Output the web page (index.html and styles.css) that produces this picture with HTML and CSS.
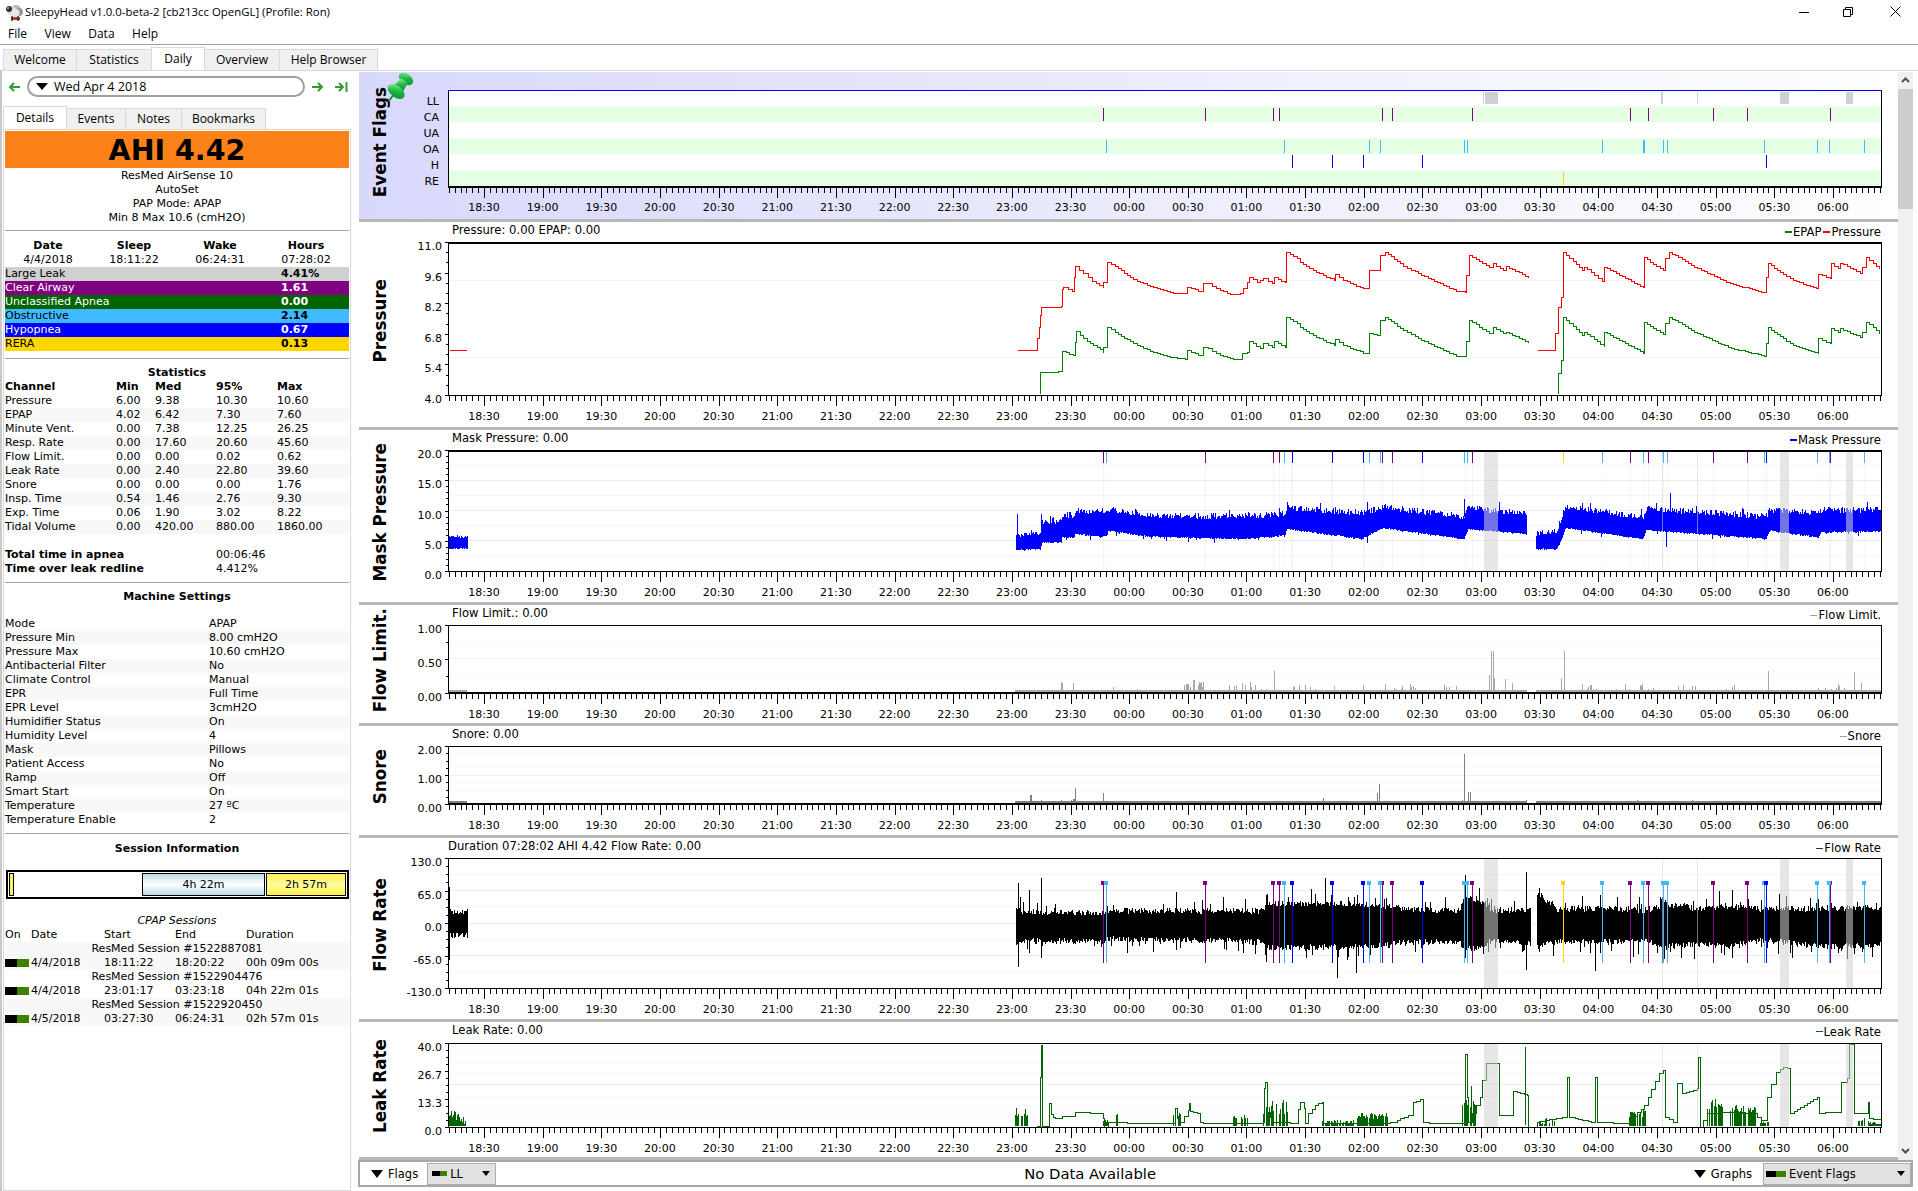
FILE: index.html
```html
<!DOCTYPE html>
<html lang="en">
<head>
<meta charset="utf-8">
<title>SleepyHead</title>
<link rel="stylesheet" href="styles.css">
</head>
<body>
<div class="window">
  <header class="titlebar">
    <svg class="app-icon" viewBox="0 0 20 18" width="20" height="18">
      <circle cx="12" cy="7" r="5" fill="#b8b8b8"/><circle cx="8" cy="8" r="4.5" fill="#d8d8d8"/><circle cx="15" cy="9" r="4" fill="#9a9a9a"/><circle cx="11" cy="10" r="4.5" fill="#e8e8e8"/>
      <circle cx="5" cy="6" r="3" fill="#3a3030"/><circle cx="4" cy="5" r=".8" fill="#fff"/>
      <path d="M7 14h9v3H7z" fill="#b04030"/><path d="M8 13v5M14 13v5" stroke="#303030" stroke-width="1.4"/>
    </svg>
    <span class="app-title">SleepyHead v1.0.0-beta-2 [cb213cc OpenGL] (Profile: Ron)</span>
    <div class="winctl">
      <svg width="10" height="10" viewBox="0 0 10 10"><path d="M0 5.5h10" stroke="#000"/></svg>
      <svg width="10" height="10" viewBox="0 0 10 10"><path d="M.5 2.5h7v7h-7zM2.5 2.5v-2h7v7h-2" fill="none" stroke="#000"/></svg>
      <svg width="11" height="11" viewBox="0 0 11 11"><path d="M.5.5l10 10M10.5.5l-10 10" stroke="#000"/></svg>
    </div>
  </header>
  <nav class="menubar">
    <span class="menu-item">File</span><span class="menu-item">View</span><span class="menu-item">Data</span><span class="menu-item">Help</span>
  </nav>
  <div class="tabs main-tabs">
    <span class="tab t-welcome">Welcome</span>
    <span class="tab t-stats">Statistics</span>
    <span class="tab t-daily active">Daily</span>
    <span class="tab t-over">Overview</span>
    <span class="tab t-help">Help Browser</span>
  </div>
  <main class="main">
    <aside class="sidebar">
      <div class="datenav">
        <svg class="nav-arrow" width="13" height="10" viewBox="0 0 13 10"><path d="M12 5H3M6 1L2 5l4 4" fill="none" stroke="#2f9e2f" stroke-width="2"/></svg>
        <div class="datebox"><span class="tri"></span><span class="date-text">Wed Apr 4 2018</span></div>
        <svg class="nav-arrow" width="13" height="10" viewBox="0 0 13 10"><path d="M1 5h9M7 1l4 4-4 4" fill="none" stroke="#2f9e2f" stroke-width="2"/></svg>
        <svg class="nav-arrow end" width="14" height="10" viewBox="0 0 14 10"><path d="M1 5h7M5 1l4 4-4 4M12.5 0v10" fill="none" stroke="#2f9e2f" stroke-width="2"/></svg>
      </div>
      <div class="tabs sub-tabs">
        <span class="tab s-details active">Details</span>
        <span class="tab s-events">Events</span>
        <span class="tab s-notes">Notes</span>
        <span class="tab s-book">Bookmarks</span>
      </div>
      <div class="pane">
        <div class="ahi">AHI 4.42</div>
        <div class="center">ResMed AirSense 10</div>
        <div class="center">AutoSet</div>
        <div class="center">PAP Mode: APAP</div>
        <div class="center">Min 8 Max 10.6 (cmH2O)</div>
        <div class="rule rule-first"></div>
        <div class="r-times bold center-cells"><span>Date</span><span>Sleep</span><span>Wake</span><span>Hours</span></div>
        <div class="r-times center-cells"><span>4/4/2018</span><span>18:11:22</span><span>06:24:31</span><span>07:28:02</span></div>
        <div class="r-event e-ll"><span>Large Leak</span><b>4.41%</b></div>
        <div class="r-event e-ca"><span>Clear Airway</span><b>1.61</b></div>
        <div class="r-event e-ua"><span>Unclassified Apnea</span><b>0.00</b></div>
        <div class="r-event e-oa"><span>Obstructive</span><b>2.14</b></div>
        <div class="r-event e-h"><span>Hypopnea</span><b>0.67</b></div>
        <div class="r-event e-re"><span>RERA</span><b>0.13</b></div>
        <div class="rule rule-wide"></div>
        <div class="center bold">Statistics</div>
        <div class="r-stat bold"><span>Channel</span><span>Min</span><span>Med</span><span>95%</span><span>Max</span></div>
        <div class="zebra">
          <div class="r-stat"><span>Pressure</span><span>6.00</span><span>9.38</span><span>10.30</span><span>10.60</span></div>
          <div class="r-stat"><span>EPAP</span><span>4.02</span><span>6.42</span><span>7.30</span><span>7.60</span></div>
          <div class="r-stat"><span>Minute Vent.</span><span>0.00</span><span>7.38</span><span>12.25</span><span>26.25</span></div>
          <div class="r-stat"><span>Resp. Rate</span><span>0.00</span><span>17.60</span><span>20.60</span><span>45.60</span></div>
          <div class="r-stat"><span>Flow Limit.</span><span>0.00</span><span>0.00</span><span>0.02</span><span>0.62</span></div>
          <div class="r-stat"><span>Leak Rate</span><span>0.00</span><span>2.40</span><span>22.80</span><span>39.60</span></div>
          <div class="r-stat"><span>Snore</span><span>0.00</span><span>0.00</span><span>0.00</span><span>1.76</span></div>
          <div class="r-stat"><span>Insp. Time</span><span>0.54</span><span>1.46</span><span>2.76</span><span>9.30</span></div>
          <div class="r-stat"><span>Exp. Time</span><span>0.06</span><span>1.90</span><span>3.02</span><span>8.22</span></div>
          <div class="r-stat"><span>Tidal Volume</span><span>0.00</span><span>420.00</span><span>880.00</span><span>1860.00</span></div>
        </div>
        <div class="totals">
          <div class="r-total"><b>Total time in apnea</b><span>00:06:46</span></div>
          <div class="r-total"><b>Time over leak redline</b><span>4.412%</span></div>
        </div>
        <div class="rule rule-tight"></div>
        <div class="center bold heading-gap">Machine Settings</div>
        <div class="zebra">
          <div class="r-set"><span>Mode</span><span>APAP</span></div>
          <div class="r-set"><span>Pressure Min</span><span>8.00 cmH2O</span></div>
          <div class="r-set"><span>Pressure Max</span><span>10.60 cmH2O</span></div>
          <div class="r-set"><span>Antibacterial Filter</span><span>No</span></div>
          <div class="r-set"><span>Climate Control</span><span>Manual</span></div>
          <div class="r-set"><span>EPR</span><span>Full Time</span></div>
          <div class="r-set"><span>EPR Level</span><span>3cmH2O</span></div>
          <div class="r-set"><span>Humidifier Status</span><span>On</span></div>
          <div class="r-set"><span>Humidity Level</span><span>4</span></div>
          <div class="r-set"><span>Mask</span><span>Pillows</span></div>
          <div class="r-set"><span>Patient Access</span><span>No</span></div>
          <div class="r-set"><span>Ramp</span><span>Off</span></div>
          <div class="r-set"><span>Smart Start</span><span>On</span></div>
          <div class="r-set"><span>Temperature</span><span>27 ºC</span></div>
          <div class="r-set"><span>Temperature Enable</span><span>2</span></div>
        </div>
        <div class="rule"></div>
        <div class="center bold">Session Information</div>
        <div class="sessbar">
          <div class="sb-tiny"></div>
          <div class="sb-gap"></div>
          <div class="sb-blue">4h 22m</div>
          <div class="sb-yellow">2h 57m</div>
        </div>
        <div class="center italic cpap">CPAP Sessions</div>
        <div class="r-sess"><span>On</span><span>Date</span><span>Start</span><span>End</span><span>Duration</span></div>
        <div class="zebra-pairs">
          <div class="center">ResMed Session #1522887081</div>
          <div class="r-sess"><span class="chip"></span><span>4/4/2018</span><span>18:11:22</span><span>18:20:22</span><span>00h 09m 00s</span></div>
          <div class="center">ResMed Session #1522904476</div>
          <div class="r-sess"><span class="chip"></span><span>4/4/2018</span><span>23:01:17</span><span>03:23:18</span><span>04h 22m 01s</span></div>
          <div class="center">ResMed Session #1522920450</div>
          <div class="r-sess"><span class="chip"></span><span>4/5/2018</span><span>03:27:30</span><span>06:24:31</span><span>02h 57m 01s</span></div>
        </div>
      </div>
    </aside>
    <div class="content">
      <div class="view">
        <div class="graphs">
          <section class="graph g-flags">
            <div class="gtitle"><span>Event Flags</span></div>
            <div class="gbody"><div class="ghead"></div><svg id="flags" class="plot"></svg></div>
            <svg class="pin" width="29" height="31" viewBox="4 2 23 27">
              <defs><linearGradient id="pinfill" x1="0" y1="0" x2="1" y2="1"><stop offset="0" stop-color="#a4f4b0"/><stop offset=".5" stop-color="#17b63f"/><stop offset="1" stop-color="#0a8a2c"/></linearGradient></defs>
              <g transform="rotate(38 15 15)">
                <ellipse cx="15" cy="5" rx="7" ry="4.500" fill="url(#pinfill)"/>
                <path d="M11.500 7h7l1.500 10H10z" fill="url(#pinfill)"/>
                <ellipse cx="15" cy="19" rx="8.500" ry="5" fill="url(#pinfill)"/>
                <path d="M15 23v7" stroke="#0a8a2c" stroke-width="1.500"/>
              </g>
            </svg>
          </section>
          <section class="graph g-pressure">
            <div class="gtitle"><span>Pressure</span></div>
            <div class="gbody">
              <div class="ghead"><span>Pressure: 0.00 EPAP: 0.00</span><span class="legend"><i class="sw green"></i>EPAP<i class="sw red"></i>Pressure</span></div>
              <svg id="pressure" class="plot"></svg>
            </div>
          </section>
          <section class="graph g-mask">
            <div class="gtitle"><span>Mask Pressure</span></div>
            <div class="gbody">
              <div class="ghead"><span>Mask Pressure: 0.00</span><span class="legend"><i class="sw blue"></i>Mask Pressure</span></div>
              <svg id="mask" class="plot"></svg>
            </div>
          </section>
          <section class="graph g-limit">
            <div class="gtitle"><span>Flow Limit.</span></div>
            <div class="gbody">
              <div class="ghead"><span>Flow Limit.: 0.00</span><span class="legend"><i class="sw grey"></i>Flow Limit.</span></div>
              <svg id="limit" class="plot"></svg>
            </div>
          </section>
          <section class="graph g-snore">
            <div class="gtitle"><span>Snore</span></div>
            <div class="gbody">
              <div class="ghead"><span>Snore: 0.00</span><span class="legend"><i class="sw grey"></i>Snore</span></div>
              <svg id="snore" class="plot"></svg>
            </div>
          </section>
          <section class="graph g-flow">
            <div class="gtitle"><span>Flow Rate</span></div>
            <div class="gbody">
              <div class="ghead flush"><span>Duration 07:28:02 AHI 4.42 Flow Rate: 0.00</span><span class="legend"><i class="sw black"></i>Flow Rate</span></div>
              <svg id="flow" class="plot"></svg>
            </div>
          </section>
          <section class="graph g-leak">
            <div class="gtitle"><span>Leak Rate</span></div>
            <div class="gbody">
              <div class="ghead"><span>Leak Rate: 0.00</span><span class="legend"><i class="sw dkgreen"></i>Leak Rate</span></div>
              <svg id="leak" class="plot"></svg>
            </div>
          </section>
        </div>
        <div class="scrollbar">
          <svg class="sb-arrow" width="9" height="6" viewBox="0 0 9 6"><path d="M1 5l3.500-3.500L8 5" fill="none" stroke="#505050" stroke-width="2"/></svg>
          <div class="sb-thumb"></div>
          <div class="sb-track"></div>
          <svg class="sb-arrow" width="9" height="6" viewBox="0 0 9 6"><path d="M1 1l3.500 3.500L8 1" fill="none" stroke="#505050" stroke-width="2"/></svg>
        </div>
      </div>
      <footer class="bottombar">
        <span class="tri tri-lg"></span><span class="bb-label">Flags</span>
        <div class="combo c-flags"><span class="chip small"></span><span class="combo-text">LL</span><span class="tri tri-sm"></span></div>
        <div class="nodata">No Data Available</div>
        <span class="tri tri-lg"></span><span class="bb-label">Graphs</span>
        <div class="combo c-graphs"><span class="chip small2"></span><span class="combo-text">Event Flags</span><span class="tri tri-sm"></span></div>
      </footer>
    </div>
  </main>
</div>
<script src="charts.js"></script>
</body>
</html>
```
FILE: styles.css
```css
* { box-sizing: border-box; }
html, body { margin: 0; padding: 0; }
body {
  width: 1918px; height: 1191px; overflow: hidden;
  font-family: "DejaVu Sans", sans-serif; font-size: 11px; line-height: 14px;
  color: #000; background: #fff;
}
.window { display: flex; flex-direction: column; height: 1191px; }

.titlebar { display: flex; align-items: center; height: 23px; padding-left: 4px; font-family: "Open Sans", sans-serif; font-size: 11.4px; }
.app-title { white-space: nowrap; margin-left: 1px; }
.winctl { margin-left: auto; display: flex; align-items: center; gap: 34px; padding-right: 17px; }
.winctl svg:nth-child(2) { margin-right: 3px; }

.menubar { display: flex; align-items: center; height: 22px; padding-left: 8px; font-family: "Open Sans", sans-serif; font-size: 12px; gap: 17.500px; border-bottom: 1px solid #a0a0a0; }

.tabs { display: flex; align-items: flex-end; font-family: "Open Sans", sans-serif; font-size: 12px; }
.tab { display: flex; align-items: center; justify-content: center; height: 21px; background: #f0f0f0; border: 1px solid #d9d9d9; border-bottom: 0; margin-right: -1px; white-space: nowrap; }
.tab.active { height: 23px; background: #fff; position: relative; z-index: 1; }
.main-tabs { height: 25px; padding-left: 3px; }
.t-welcome { width: 74px; } .t-stats { width: 76px; } .t-daily { width: 54px; } .t-over { width: 76px; } .t-help { width: 99px; }
.sub-tabs { height: 22px; }
.s-details { width: 64px; } .s-events { width: 60px; } .s-notes { width: 57px; } .s-book { width: 85px; }

.main { display: flex; flex: 1; min-height: 0; border-top: 1px solid #d9d9d9; border-left: 2px solid #c8c8c8; }
.sidebar { width: 357px; flex: none; padding-left: 1px; display: flex; flex-direction: column; }
.datenav { display: flex; align-items: center; height: 36px; padding: 0 0 5px 5px; }
.nav-arrow { flex: none; }
.datebox { width: 278px; height: 21px; margin: 0 6px; border: 2px solid #a0a0a0; border-radius: 11px; display: flex; align-items: center; padding-left: 7px; font-family: "Open Sans", sans-serif; font-size: 12.500px; }
.date-text { margin-left: 6px; }
.nav-arrow.end { margin-left: 10px; }

.tri { display: inline-block; width: 0; height: 0; border-left: 6px solid transparent; border-right: 6px solid transparent; border-top: 7px solid #000; flex: none; }
.tri-lg { border-left-width: 6.500px; border-right-width: 6.500px; border-top-width: 8px; }
.tri-sm { border-left-width: 4px; border-right-width: 4px; border-top-width: 5px; margin-left: auto; }

.pane { width: 348px; flex: 1; min-height: 0; border: 1px solid #d9d9d9; padding: 1px 1px 0; overflow: hidden; }
.ahi { height: 37px; margin-bottom: 1px; background: #fb8118; font-weight: 700; font-size: 28.500px; line-height: 39px; text-align: center; }
.center { text-align: center; white-space: nowrap; }
.bold { font-weight: 700; }
.italic { font-style: italic; }
.rule { height: 1px; background: #a8a8a8; margin: 6px 0 8px; }
.rule-first { margin: 5px 0 8px; }
.rule-wide { margin: 7px 0 7px; }
.rule-tight { margin: 6px 0 7px; }
.heading-gap { margin-bottom: 13px; }

.r-times { display: grid; grid-template-columns: repeat(4, 86px); }
.center-cells { text-align: center; }
.r-event { display: grid; grid-template-columns: 276px 1fr; height: 14px; white-space: nowrap; }
.r-event b { font-weight: 700; }
.e-ll { background: #d0d0d0; }
.e-ca { background: #800080; color: #fff; }
.e-ua { background: #006400; color: #fff; }
.e-oa { background: #3fbaff; }
.e-h { background: #0000ff; color: #fff; }
.e-re { background: #ffd700; }

.r-stat { display: grid; grid-template-columns: 111px 39px 61px 61px 1fr; height: 14px; white-space: nowrap; }
.zebra > :nth-child(even) { background: #f8f8f8; }
.totals { margin-top: 14px; }
.r-total { display: grid; grid-template-columns: 211px 1fr; height: 14px; white-space: nowrap; }
.r-total b { font-weight: 700; }
.r-set { display: grid; grid-template-columns: 204px 1fr; height: 14px; white-space: nowrap; }

.sessbar { display: flex; height: 29px; margin: 14px 0 15px 1px; border: 2px solid #000; padding: 1px; gap: 1px; }
.sb-tiny { width: 5px; background: linear-gradient(90deg, #ffe93a, #fff77a 50%, #ffe93a); border: 1px solid #000; }
.sb-gap { width: 126px; }
.sb-blue { width: 123px; border: 1px solid #000; background: linear-gradient(#bcdce8, #ffffff 50%, #bcdce8); text-align: center; line-height: 21px; }
.sb-yellow { flex: 1; border: 1px solid #000; background: linear-gradient(#fff14a, #fffca0 50%, #fff14a); text-align: center; line-height: 21px; }
.cpap { height: 14px; }

.r-sess { display: grid; grid-template-columns: 26px 73px 71px 71px 1fr; height: 14px; white-space: nowrap; align-items: center; }
.zebra-pairs > :nth-child(4n+1), .zebra-pairs > :nth-child(4n+2) { background: #f8f8f8; }
.chip { display: block; width: 24px; height: 8px; background: linear-gradient(90deg, #000 50%, #3c8200 50%); }

.content { flex: 1; min-width: 0; display: flex; flex-direction: column; padding-right: 5px; padding-top: 1px; }
.view { display: flex; height: 1088px; }
.graphs { flex: 1; min-width: 0; }
.graph { display: flex; border-bottom: 3px solid #b8b8b8; position: relative; }
.g-flags { height: 150px; background: linear-gradient(90deg, #d8d8fc, #ffffff); }
.g-pressure { height: 208px; }
.g-mask { height: 175px; }
.g-limit { height: 121px; }
.g-snore { height: 112px; }
.g-flow { height: 184px; }
.g-leak { height: 138px; }
.gtitle { width: 40px; flex: none; display: flex; align-items: center; justify-content: center; padding: 25px 0 32px 2px; }
.gtitle span { writing-mode: vertical-rl; transform: rotate(180deg); font-weight: 700; font-size: 16.800px; line-height: 20px; white-space: nowrap; }
.gbody { flex: 1; min-width: 0; display: flex; flex-direction: column; }
.ghead { height: 18px; flex: none; display: flex; justify-content: space-between; align-items: center; padding: 0 17px 2px 53px; white-space: nowrap; font-size: 11.600px; }
.ghead.flush { padding-left: 49px; }
.g-flags .ghead { height: 16px; }
.g-leak .ghead { height: 19px; padding-bottom: 4px; }
.legend { display: flex; align-items: center; padding-top: 4px; }
.sw { display: block; width: 7px; height: 2px; margin-right: 1px; }
.sw.green { background: #008000; } .sw.red { background: #f00; margin-left: 2px; } .sw.blue { background: #00f; }
.sw.grey { background: #a0a0a0; height: 1px; } .sw.black { background: #303030; height: 1px; } .sw.dkgreen { background: #006400; height: 1px; }
.plot { display: block; width: 1499px; flex: none; overflow: hidden; }
.plot text { font-family: "DejaVu Sans", sans-serif; font-size: 11px; fill: #000; }
.pin { position: absolute; left: 26px; top: 1px; }

.scrollbar { width: 15px; flex: none; display: flex; flex-direction: column; align-items: center; background: #f0f0f0; }
.sb-arrow { margin: 5px 0 6px; flex: none; }
.sb-thumb { width: 100%; height: 120px; background: #cdcdcd; flex: none; }
.sb-track { flex: 1; }

.bottombar { height: 27px; border: 2px solid #a8a8a8; margin-left: -1px; display: flex; align-items: center; padding-left: 11px; }
.bb-label { margin-left: 5px; font-size: 11.500px; padding-top: 1px; }
.combo { display: flex; align-items: center; height: 22px; background: #e1e1e1; border: 1px solid #adadad; font-size: 11.500px; }
.c-flags { width: 69px; margin-left: 9px; padding: 0 5px 0 4px; }
.c-graphs { width: 148px; margin-left: 11px; padding: 0 5px 0 2px; }
.chip.small { width: 15px; height: 5px; flex: none; }
.chip.small2 { width: 20px; height: 6px; flex: none; }
.combo-text { margin-left: 3px; }
.nodata { flex: 1; padding: 1px 0 0 528px; font-size: 14.800px; white-space: nowrap; }
```
FILE: charts.js
```js
(function () {
  var NS_LEFT = 399, WIDTH = 1499;
  var L = 448, R = 1881;

  function rng(seed) {
    return function () {
      seed |= 0; seed = seed + 0x6D2B79F5 | 0;
      var t = Math.imul(seed ^ seed >>> 15, 1 | seed);
      t = t + Math.imul(t ^ t >>> 7, 61 | t) ^ t;
      return ((t ^ t >>> 14) >>> 0) / 4294967296;
    };
  }
  function px(v) { return Math.round(v) + 0.5; }

  var CA = [1103, 1205, 1273, 1279, 1382, 1392, 1472, 1630, 1648, 1713, 1747, 1830];
  var OA = [1106, 1284, 1369, 1380, 1464, 1467, 1602, 1643, 1663, 1667, 1764, 1817, 1829, 1864];
  var HY = [1292, 1332, 1363, 1422, 1766];
  var RE = [1563];
  var COL = { CA: '#800080', OA: '#40b8ff', H: '#0000ff', RE: '#ffd700' };
  var SHADE = [[1484, 1498], [1780, 1789], [1846, 1853]];
  var THIN = [1662, 1697];
  var ALL = [];
  CA.forEach(function (x) { ALL.push([x, COL.CA]); });
  OA.forEach(function (x) { ALL.push([x, COL.OA]); });
  HY.forEach(function (x) { ALL.push([x, COL.H]); });
  RE.forEach(function (x) { ALL.push([x, COL.RE]); });

  function line(x1, y1, x2, y2, c, w) {
    return '<line x1="' + x1 + '" y1="' + y1 + '" x2="' + x2 + '" y2="' + y2 + '" stroke="' + c + '" stroke-width="' + (w || 1) + '" shape-rendering="crispEdges"/>';
  }
  function rect(x, y, w, h, c, extra) {
    return '<rect x="' + x + '" y="' + y + '" width="' + w + '" height="' + h + '" fill="' + c + '" ' + (extra || '') + ' shape-rendering="crispEdges"/>';
  }
  function label(x, y, t, anchor) {
    return '<text x="' + x + '" y="' + y + '" text-anchor="' + anchor + '">' + t + '</text>';
  }
  function columns(cols, color, width) {
    var d = cols.map(function (c) { return 'M' + c[0] + ' ' + c[1] + 'V' + c[2]; }).join('');
    return '<path d="' + d + '" stroke="' + color + '" stroke-width="' + (width || 1) + '" fill="none" shape-rendering="crispEdges"/>';
  }
  function steps(pts, color) {
    var d = 'M' + px(pts[0][0]) + ' ' + px(pts[0][1]);
    for (var i = 1; i < pts.length; i++) {
      var a = pts[i - 1], b = pts[i], dx = b[0] - a[0];
      var n = Math.max(1, Math.floor(dx / 3));
      for (var k = 1; k <= n; k++) {
        var t = k / n;
        d += 'H' + px(a[0] + dx * t) + 'V' + px(a[1] + (b[1] - a[1]) * t);
      }
    }
    return '<path d="' + d + '" stroke="' + color + '" fill="none" stroke-width="1" shape-rendering="crispEdges"/>';
  }
  function hhmm(i) {
    var m = 18 * 60 + 30 + i * 30;
    var h = Math.floor(m / 60) % 24, mi = m % 60;
    return (h < 10 ? '0' : '') + h + ':' + (mi < 10 ? '0' : '') + mi;
  }
  function xaxis(bottom, labelDy) {
    var s = '', d = '';
    for (var k = -6; ; k++) {
      var x = 484 + 5.865 * k;
      if (x > R) break;
      var major = ((k % 10) + 10) % 10 === 0;
      d += 'M' + px(x) + ' ' + bottom + 'v' + (major ? 11 : 6);
    }
    s += '<path d="' + d + '" stroke="#000" fill="none" shape-rendering="crispEdges"/>';
    for (var i = 0; i < 24; i++) {
      s += label(484 + 58.65 * i, bottom + labelDy, hhmm(i), 'middle');
    }
    return s;
  }
  function yaxis(top, bottom, labels, minors) {
    var s = '', d = '';
    var n = labels.length - 1;
    labels.forEach(function (t, i) {
      var y = top + (bottom - top) * i / n;
      d += 'M' + (L - 3) + ' ' + px(y) + 'h3';
      s += label(442, Math.round(y) + 8, t, 'end');
      if (i < n) {
        for (var m = 1; m <= minors; m++) {
          d += 'M' + (L - 2) + ' ' + px(y + (bottom - top) / n * m / (minors + 1)) + 'h2';
        }
      }
    });
    return s + '<path d="' + d + '" stroke="#000" fill="none" shape-rendering="crispEdges"/>';
  }
  function frame(top, bottom, topCol, topW, botW) {
    return rect(L, top, 1, bottom - top + 1, '#000') + rect(R, top, 1, bottom - top + 1, '#000') +
      rect(L, top, R - L + 1, topW, topCol) + rect(L, bottom - botW + 1, R - L + 1, botW, '#000');
  }
  function grid(list, c) {
    return list.map(function (y) { return line(L + 1, y + 0.5, R, y + 0.5, c); }).join('');
  }
  function shades(top, bottom) {
    var s = '';
    SHADE.forEach(function (r) { s += rect(r[0], top, r[1] - r[0], bottom - top, '#d2d2d2', 'fill-opacity="0.55"'); });
    THIN.forEach(function (x) { s += rect(x, top, 1, bottom - top, '#d2d2d2', 'fill-opacity="0.55"'); });
    return s;
  }
  function place(id, top, bottom, content) {
    var svg = document.getElementById(id);
    var yTop = top - 2, h = bottom + 32 - yTop;
    svg.setAttribute('viewBox', NS_LEFT + ' ' + yTop + ' ' + WIDTH + ' ' + h);
    svg.setAttribute('height', h);
    svg.innerHTML = content;
  }
  function interp(env, X) {
    for (var i = 1; i < env.length; i++) {
      if (X <= env[i][0]) {
        var a = env[i - 1], b = env[i], t = (X - a[0]) / (b[0] - a[0] || 1);
        return [a[1] + (b[1] - a[1]) * t, a[2] + (b[2] - a[2]) * t];
      }
    }
    var l = env[env.length - 1];
    return [l[1], l[2]];
  }

  /* Event flags */
  (function () {
    var top = 90, bottom = 187, s = '';
    var names = ['LL', 'CA', 'UA', 'OA', 'H', 'RE'];
    s += rect(L, top, R - L, bottom - top, '#fff');
    names.forEach(function (n, i) {
      if (i % 2) s += rect(L, 90 + 16 * i, R - L, 16, '#e4ffe4');
      s += label(439, 105 + 16 * i, n, 'end');
    });
    [[1483, 1], [1485, 13], [1661, 2], [1697, 1], [1780, 9], [1846, 7]].forEach(function (r) {
      s += rect(r[0], 92, r[1], 12, '#d0d0d0');
    });
    CA.forEach(function (x) { s += rect(x, 108, 1, 13, COL.CA); });
    OA.forEach(function (x) { s += rect(x, 140, x === 1643 ? 2 : 1, 13, COL.OA); });
    HY.forEach(function (x) { s += rect(x, 155, 1, 13, COL.H); });
    RE.forEach(function (x) { s += rect(x, 172, 1, 13, COL.RE); });
    s += frame(top, bottom, '#0000ff', 1, 2);
    s += xaxis(bottom, 24);
    place('flags', top, bottom, s);
  })();

  /* Pressure */
  (function () {
    var top = 242, bottom = 395;
    function z9(a) { return a.map(function (p) { return [1000 + p[0] / 3, 230 + p[1] / 3]; }); }
    function z5(a) { return a.map(function (p) { return [1300 + p[0] / 2.537, 70 + p[1] / 3]; }); }
    var red0 = z9([[52, 361], [112, 361], [112, 325], [116, 292], [120, 256], [122, 232], [184, 229], [185, 178], [190, 170], [216, 184], [222, 142], [226, 107], [250, 130], [275, 152], [310, 172], [310, 155], [322, 155], [322, 97], [345, 107], [400, 148], [460, 172], [520, 190], [555, 190], [562, 170], [595, 182], [608, 160], [625, 160], [660, 180], [690, 192], [720, 190], [730, 175], [742, 155], [748, 140], [770, 155], [790, 145], [815, 160], [822, 142], [855, 157], [859, 67], [890, 85]])
      .concat(z5([[0, 577], [40, 605], [85, 630], [88, 613], [110, 630], [160, 655], [175, 655], [176, 600], [195, 600], [202, 555], [215, 545], [262, 587], [300, 610], [395, 662], [418, 665], [420, 615], [428, 615], [428, 555], [480, 590], [490, 580], [515, 600], [523, 588], [578, 622]]));
    var red1 = z5([[601, 841], [645, 841], [648, 790], [654, 712], [661, 680], [666, 640], [668, 545], [715, 600], [720, 590], [765, 632], [770, 590], [870, 652], [873, 562], [920, 600], [925, 565], [934, 565], [936, 545], [1000, 590], [1090, 640], [1178, 667], [1182, 622], [1187, 580], [1250, 630], [1310, 655], [1315, 612], [1345, 625], [1347, 580], [1365, 595], [1370, 578], [1420, 608], [1425, 590], [1435, 562], [1470, 595]]);
    var gr0 = z9([[118, 488], [120, 427], [184, 424], [186, 362], [218, 375], [224, 335], [227, 303], [250, 325], [310, 365], [310, 350], [322, 350], [322, 290], [345, 305], [400, 340], [460, 367], [520, 382], [555, 387], [562, 360], [595, 375], [608, 352], [625, 355], [660, 375], [700, 388], [725, 385], [725, 368], [740, 365], [748, 332], [780, 355], [790, 340], [815, 352], [822, 332], [855, 352], [859, 262], [890, 280]])
      .concat(z5([[0, 770], [40, 800], [85, 825], [88, 808], [110, 825], [160, 848], [175, 850], [176, 790], [195, 795], [202, 750], [215, 740], [262, 780], [300, 805], [395, 857], [420, 857], [420, 812], [428, 812], [428, 750], [480, 790], [490, 772], [515, 790], [523, 785], [578, 817]]));
    var gr1 = z5([[651, 970], [654, 910], [661, 870], [666, 832], [668, 740], [715, 795], [720, 785], [770, 828], [771, 785], [870, 848], [873, 755], [920, 793], [925, 760], [934, 760], [936, 740], [1000, 785], [1100, 838], [1120, 840], [1178, 858], [1182, 820], [1187, 772], [1250, 825], [1313, 850], [1315, 805], [1345, 820], [1347, 773], [1365, 785], [1370, 775], [1420, 800], [1425, 785], [1435, 755], [1470, 788]]);
    var s = grid([280, 357], '#f2f2f2');
    s += line(450, 350.5, 467, 350.5, '#f00');
    s += steps(red0, '#f00') + steps(red1, '#f00') + steps(gr0, '#008000') + steps(gr1, '#008000');
    s += frame(top, bottom, '#000', 2, 1);
    s += yaxis(top, bottom, ['11.0', '9.6', '8.2', '6.8', '5.4', '4.0'], 2);
    s += xaxis(bottom, 25);
    place('pressure', top, bottom, s);
  })();

  /* Mask pressure */
  (function () {
    var top = 450, bottom = 571, r = rng(11), cols = [];
    var env = [[28, 288, 328], [71, 285, 325], [72, 247, 305], [107, 245, 305], [108, 228, 290], [129, 228, 290], [130, 216, 280], [186, 216, 288], [188, 210, 270], [260, 228, 288], [350, 232, 292], [420, 230, 295], [496, 225, 285], [500, 206, 265], [630, 222, 295], [665, 204, 262], [808, 232, 295], [815, 208, 265], [918, 222, 280]];
    var env2 = [[934, 282, 325], [970, 276, 325], [978, 235, 295], [985, 202, 262], [1120, 235, 295], [1125, 208, 268], [1335, 232, 295], [1340, 212, 270], [1425, 222, 290], [1430, 212, 275], [1535, 212, 272]];
    function band(e, from, to) {
      for (var X = from; X <= to; X += 1.742) {
        var v = interp(e, X), x = px(1000 + X / 1.742);
        var t = 442 + v[0] / 3 - r() * 6, b = 440 + v[1] / 3 + r() * 1.5;
        if (r() < 0.06) t -= r() * 7;
        if (r() < 0.03) b += r() * 5;
        cols.push([x, t.toFixed(1), b.toFixed(1)]);
      }
    }
    band(env, 28, 918); band(env2, 934, 1535);
    for (var x = 449; x <= 467; x++) cols.push([x + 0.5, (535 + r() * 3).toFixed(1), (548 + r() * 1.5).toFixed(1)]);
    [[30, 222, 290], [72, 222, 260], [500, 185, 210], [640, 185, 222], [808, 178, 230], [870, 185, 210], [1167, 160, 210], [1510, 185, 215], [1160, 260, 320], [640, 280, 308]].forEach(function (a) {
      cols.push([px(1000 + a[0] / 1.742), 440 + a[1] / 3, 440 + a[2] / 3]);
    });
    var s = grid([480, 510, 540], '#ececec') + grid([465, 495, 525, 555], '#f6f6f6');
    ALL.forEach(function (e) { s += rect(e[0], top, 1, bottom - top, e[1], 'fill-opacity="0.06"'); });
    s += columns(cols, '#0000ff');
    s += shades(top, bottom);
    ALL.forEach(function (e) { s += rect(e[0], 451, 1, 12, e[1]); });
    s += frame(top, bottom, '#000', 2, 1);
    s += yaxis(top, bottom, ['20.0', '15.0', '10.0', '5.0', '0.0'], 4);
    s += xaxis(bottom, 25);
    place('mask', top, bottom, s);
  })();

  function zbars(list, toY, base, r, seedZones, maxRise) {
    var cols = [];
    list.forEach(function (a) { cols.push([px(1000 + a[0] / 1.742), toY(a[1]), base]); });
    seedZones.forEach(function (z) {
      for (var i = 0; i < z[2]; i++) {
        var X = z[0] + r() * (z[1] - z[0]);
        cols.push([px(1000 + X / 1.742), (base - 1 - r() * maxRise * (z[3] || 1)).toFixed(1), base]);
      }
    });
    return cols;
  }

  /* Flow limitation */
  (function () {
    var top = 625, bottom = 693, r = rng(5);
    var toY = function (Y) { return 610 + Y / 3; };
    var list = [[106, 215], [108, 218], [128, 220], [197, 232], [238, 238], [320, 225], [325, 222], [345, 225], [350, 217], [354, 216], [422, 218], [435, 216], [477, 183], [510, 232], [581, 228], [633, 225], [670, 222], [700, 228], [851, 195], [856, 123], [858, 123], [860, 205], [880, 208], [892, 220], [978, 205], [982, 123], [1013, 222], [1027, 225], [1205, 228], [1337, 183], [1460, 222], [1487, 186], [1500, 218]];
    var zones = [[320, 358, 18, 1.6], [380, 470, 14], [510, 550, 6], [680, 800, 16], [1020, 1040, 8], [1070, 1145, 12], [1180, 1215, 7], [1255, 1290, 5], [1415, 1505, 10]];
    var cols = zbars(list, toY, 692, r, zones, 7);
    var s = grid([658], '#f2f2f2') + grid([642, 675], '#f8f8f8');
    s += columns(cols, '#a8a8a8');
    s += rect(449, 690, 18, 2, '#a8a8a8') + rect(1015, 690, 512, 2, '#a8a8a8') + rect(1536, 690, 345, 2, '#a8a8a8');
    s += frame(top, bottom, '#000', 1, 2);
    s += yaxis(top, bottom, ['1.00', '0.50', '0.00'], 1);
    s += xaxis(bottom, 25);
    place('limit', top, bottom, s);
  })();

  /* Snore */
  (function () {
    var top = 746, bottom = 804, r = rng(9);
    var toY = function (Y) { return 610 + Y / 3; };
    var list = [[53, 555], [54, 555], [72, 570], [107, 570], [124, 570], [127, 568], [129, 568], [131, 533], [180, 549], [563, 563], [641, 574], [656, 548], [661, 522], [804, 570], [808, 432], [816, 546], [818, 546], [917, 570], [980, 573], [1110, 570], [1205, 570], [1231, 574], [1344, 574]];
    var cols = zbars(list, toY, 803, r, [], 0);
    var s = grid([775], '#efefef') + grid([753, 767, 782, 790], '#f8f8f8');
    s += columns(cols, '#808080');
    s += rect(449, 801, 18, 2, '#808080') + rect(1015, 801, 512, 2, '#808080') + rect(1536, 801, 345, 2, '#808080');
    s += frame(top, bottom, '#000', 1, 2);
    s += yaxis(top, bottom, ['2.00', '1.00', '0.00'], 3);
    s += xaxis(bottom, 25);
    place('snore', top, bottom, s);
  })();

  /* Flow rate */
  (function () {
    var top = 858, bottom = 988, r = rng(21), cols = [];
    var env = [[27, 235, 340], [40, 250, 328], [180, 252, 328], [181, 245, 322], [450, 245, 330], [455, 225, 348], [620, 225, 345], [700, 240, 330], [785, 245, 330], [790, 205, 355], [826, 220, 345], [840, 245, 325], [905, 240, 335]];
    var env2 = [[917, 195, 345], [950, 240, 330], [1060, 238, 330], [1100, 245, 325], [1135, 225, 345], [1200, 240, 335], [1240, 230, 345], [1300, 240, 325], [1400, 238, 345], [1505, 235, 340]];
    function band(e, from, to) {
      for (var X = from; X <= to; X += 1.708) {
        var v = interp(e, X), x = px(1000 + X / 1.708);
        var t = 830 + (v[0] + 6) / 3 - r() * 6, b = 830 + (v[1] - 4) / 3 + r() * 6;
        var q = r();
        if (q < 0.1) t -= r() * 14;
        if (q > 0.9) b += r() * 14;
        cols.push([x, t.toFixed(1), b.toFixed(1)]);
      }
    }
    band(env, 27, 905); band(env2, 917, 1505);
    for (var x = 449; x <= 467; x++) cols.push([x + 0.5, (908 + r() * 6).toFixed(1), (932 + r() * 6).toFixed(1)]);
    cols.push([449.5, 887, 960]);
    [[30, 160, 410], [50, 180, 370], [70, 145, 385], [300, 185, 360], [455, 195, 395], [555, 145, 350], [576, 225, 443], [595, 200, 380], [608, 230, 428], [620, 165, 395], [795, 135, 385], [899, 125, 420], [920, 175, 365], [1017, 235, 422], [1025, 195, 370], [1130, 200, 400], [1250, 180, 385], [1300, 210, 350], [1420, 220, 355], [1475, 190, 390]].forEach(function (a) {
      cols.push([px(1000 + a[0] / 1.708), 830 + a[1] / 3, 830 + a[2] / 3]);
    });
    var s = grid([890, 923, 955], '#ececec') + grid([874, 906, 939, 971], '#f6f6f6');
    s += columns(cols, '#000');
    s += shades(top, bottom);
    ALL.forEach(function (e) {
      s += rect(e[0], 883, 1, 80, e[1]);
      s += rect(e[0] - 2, 881, 4, 4, e[1]);
    });
    s += frame(top, bottom, '#000', 1, 1);
    s += yaxis(top, bottom, ['130.0', '65.0', '0.0', '-65.0', '-130.0'], 3);
    s += xaxis(bottom, 25);
    place('flow', top, bottom, s);
  })();

  /* Leak rate */
  (function () {
    var top = 1043, bottom = 1127, r = rng(33);
    function z12(a) { return a.map(function (p) { return [1000 + p[0] / 3, 1035 + p[1] / 3]; }); }
    function z7(a) { return a.map(function (p) { return [1000 + p[0] / 1.708, 830 + p[1] / 3]; }); }
    var a = z12([[45, 276], [120, 274], [121, 125], [124, 125], [124, 30], [125, 274], [148, 274], [148, 205], [152, 237], [160, 245], [165, 250], [184, 250], [185, 243], [222, 243], [225, 230], [260, 232], [300, 235], [310, 250], [312, 276], [325, 262], [360, 262], [440, 265], [520, 265], [525, 220], [530, 250], [540, 262], [565, 225], [568, 205], [570, 228], [590, 235], [600, 260], [620, 265], [700, 265], [740, 265], [790, 262], [792, 160], [796, 140], [800, 230], [820, 262], [850, 262], [860, 262], [880, 265], [895, 222], [900, 200], [912, 220], [915, 265], [925, 235], [945, 210], [965, 200], [968, 265], [1060, 265], [1075, 245], [1090, 265], [1105, 265], [1180, 262], [1200, 250], [1225, 240], [1240, 200], [1268, 190], [1268, 262], [1350, 265]]);
    var b = z7([[768, 880], [790, 880], [792, 820], [795, 672], [797, 800], [800, 875], [820, 800], [823, 750], [830, 700], [852, 697], [853, 855], [875, 855], [877, 782], [900, 795], [901, 892], [917, 892], [917, 875], [965, 860], [968, 740], [971, 860], [1010, 875], [1017, 740], [1020, 875], [1070, 880], [1100, 825], [1125, 730], [1133, 720], [1136, 860], [1150, 875], [1157, 760], [1165, 790], [1190, 775], [1193, 682], [1195, 890], [1208, 850], [1245, 845], [1285, 850], [1300, 870], [1310, 800], [1325, 725], [1338, 710], [1350, 715], [1350, 850], [1395, 800], [1398, 848], [1435, 845], [1437, 755], [1447, 745], [1450, 642], [1458, 690], [1458, 850], [1480, 850], [1483, 815], [1485, 865], [1505, 870]]);
    var cols = [];
    [[1015, 1027, 1108, 8], [1103, 1108, 1118, 4], [1115, 1117, 1112, 4], [1173, 1180, 1112, 4], [1233, 1247, 1115, 3], [1263, 1287, 1100, 12], [1322, 1353, 1120, 3], [1356, 1387, 1112, 6], [1462, 1475, 1085, 25], [1539, 1555, 1118, 5], [1628, 1645, 1110, 6], [1707, 1722, 1098, 12], [1730, 1755, 1105, 6], [1760, 1768, 1120, 3], [1858, 1868, 1118, 3], [1868, 1880, 1121, 3]].forEach(function (z) {
      for (var x = z[0]; x <= z[1]; x++) if (r() < 0.75) cols.push([x + 0.5, (z[2] + r() * z[3] * 1.2).toFixed(1), 1126]);
    });
    for (var x = 449; x <= 465; x++) cols.push([x + 0.5, (1108 + (x - 449) * 0.6 + r() * 8).toFixed(1), 1126]);
    cols.push([1525.5, 1047, 1125]);
    var s = grid([1084], '#eeeeee') + grid([1052, 1063, 1073, 1096, 1106, 1116], '#f8f8f8');
    s += columns(cols, '#006400');
    s += steps(a.slice(0, a.length - 1).filter(function (p) { return p[0] < 1440; }).concat(b), '#006400');
    s += shades(top, bottom);
    s += frame(top, bottom, '#000', 1, 1);
    s += yaxis(top, bottom, ['40.0', '26.7', '13.3', '0.0'], 3);
    s += xaxis(bottom, 25);
    place('leak', top, bottom, s);
  })();
})();
```
